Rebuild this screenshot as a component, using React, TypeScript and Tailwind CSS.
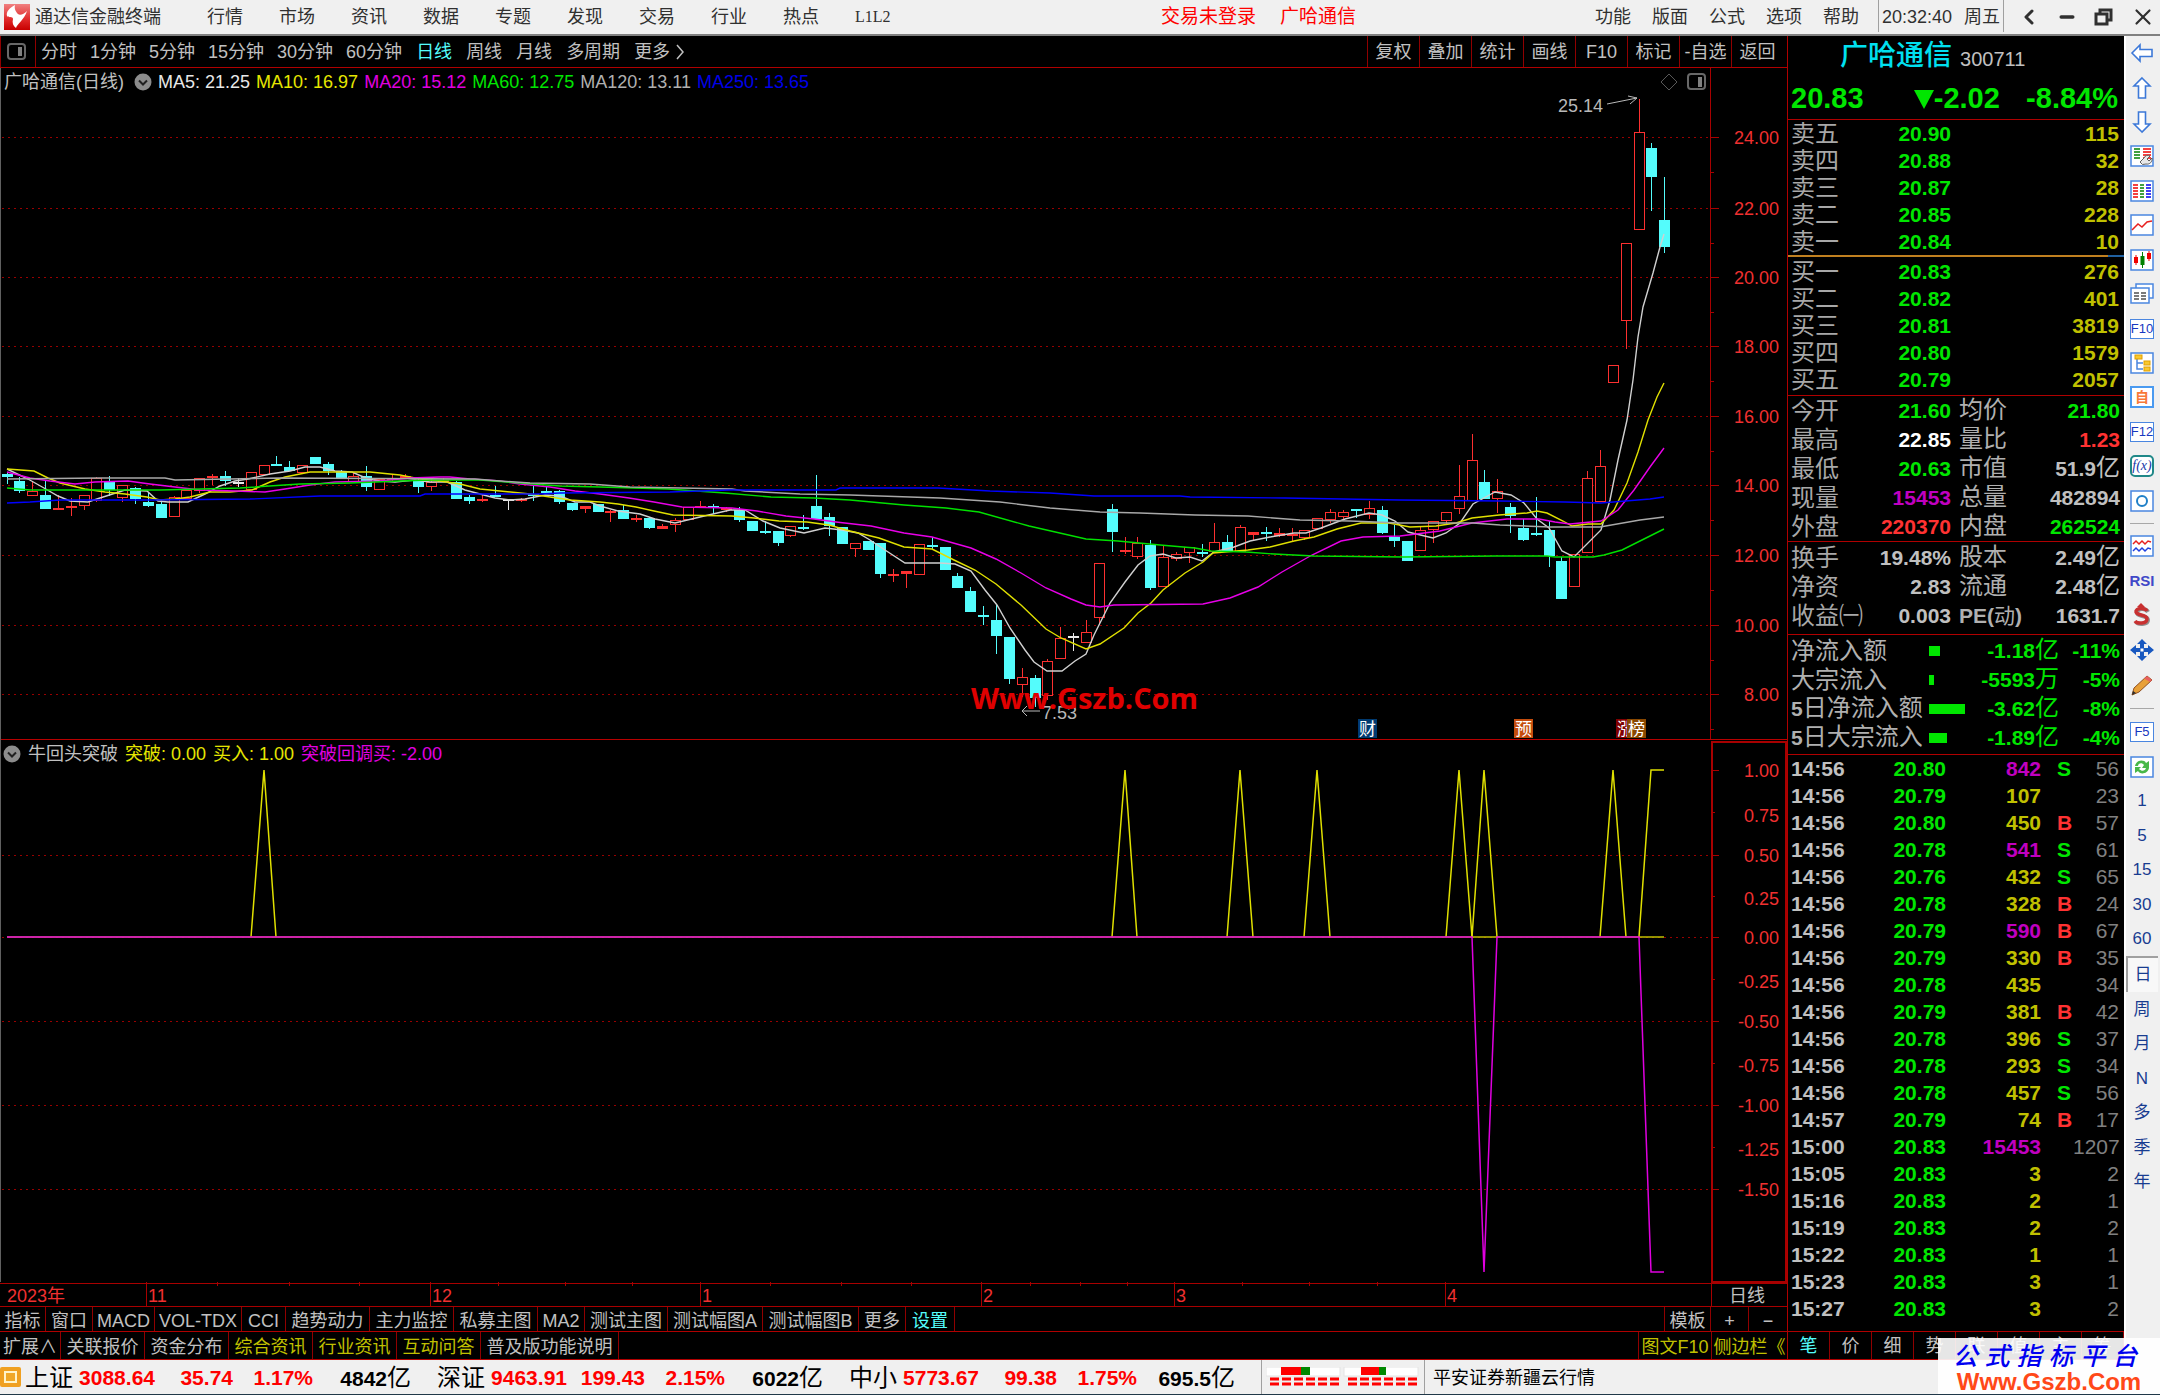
import React from "react";
import { ChevronLeft, Minus, X } from "lucide-react";

const CJK = "font-['Liberation_Sans','Noto_Sans_CJK_SC',sans-serif]";

/* ---------- chart data ---------- */

const STEP = 12.851;
const X0 = 6.5;
const cx = (i: number) => Math.round(X0 + STEP * i);

// kind (u = up, d = down, w = flat), wick top, body top, body bottom, wick bottom
type Candle = [string, number, number, number, number];
const candles: Candle[] = [
  ["d", 473, 474, 477, 484], ["d", 477, 481, 491, 493], ["u", 482, 491, 495, 495], ["d", 481, 495, 509, 509],
  ["u", 495, 508, 510, 510], ["u", 498, 506, 508, 516], ["u", 495, 495, 505, 510], ["u", 477, 478, 500, 502],
  ["d", 476, 481, 490, 496], ["u", 485, 485, 497, 502], ["d", 487, 488, 499, 504], ["d", 492, 502, 506, 507],
  ["d", 500, 504, 518, 518], ["u", 496, 497, 516, 516], ["u", 490, 490, 498, 498], ["u", 478, 478, 490, 493],
  ["u", 474, 476, 478, 485], ["d", 471, 476, 481, 486], ["w", 478, 482, 483, 487], ["u", 472, 472, 489, 489],
  ["u", 465, 465, 474, 474], ["d", 456, 464, 465, 466], ["d", 461, 467, 471, 471], ["u", 465, 465, 472, 474],
  ["d", 457, 457, 464, 464], ["d", 462, 464, 471, 475], ["d", 470, 471, 479, 479], ["u", 473, 476, 481, 481],
  ["d", 466, 476, 487, 491], ["u", 479, 479, 489, 489], ["u", 474, 478, 480, 482], ["u", 474, 476, 478, 479],
  ["d", 479, 481, 487, 493], ["u", 479, 482, 486, 491], ["u", 478, 480, 481, 482], ["d", 481, 482, 499, 499],
  ["d", 495, 497, 501, 504], ["u", 495, 499, 501, 502], ["d", 486, 495, 497, 497], ["w", 499, 499, 500, 510],
  ["u", 498, 499, 501, 502], ["d", 485, 494, 496, 501], ["d", 487, 491, 492, 492], ["d", 490, 491, 502, 504],
  ["d", 503, 503, 510, 511], ["u", 506, 506, 509, 513], ["d", 504, 504, 512, 512], ["u", 510, 511, 513, 522],
  ["d", 505, 510, 519, 519], ["u", 515, 518, 519, 522], ["d", 517, 518, 528, 529], ["u", 524, 526, 529, 529],
  ["u", 518, 520, 524, 532], ["u", 507, 507, 519, 519], ["u", 501, 506, 507, 508], ["d", 504, 506, 507, 514],
  ["u", 507, 508, 510, 512], ["d", 507, 510, 520, 522], ["d", 521, 521, 531, 531], ["d", 521, 531, 532, 534],
  ["d", 531, 531, 543, 546], ["u", 526, 526, 535, 537], ["d", 515, 527, 528, 530], ["d", 475, 506, 519, 519],
  ["d", 513, 517, 526, 536], ["d", 527, 527, 544, 544], ["u", 543, 543, 548, 557], ["d", 541, 541, 550, 550],
  ["d", 543, 543, 574, 578], ["u", 569, 574, 576, 582], ["u", 571, 571, 574, 588], ["u", 544, 544, 574, 574],
  ["d", 537, 545, 547, 549], ["d", 547, 547, 570, 570], ["d", 573, 576, 588, 588], ["d", 587, 591, 612, 612],
  ["d", 606, 615, 617, 625], ["d", 605, 620, 636, 654], ["d", 637, 637, 679, 684], ["u", 668, 677, 684, 697],
  ["d", 675, 678, 698, 707], ["u", 659, 661, 695, 700], ["u", 627, 638, 658, 658], ["w", 633, 636, 638, 651],
  ["u", 620, 632, 642, 642], ["u", 563, 563, 617, 625], ["d", 504, 509, 532, 552], ["u", 537, 550, 552, 554],
  ["u", 537, 543, 556, 559], ["d", 540, 545, 588, 590], ["u", 545, 557, 586, 586], ["u", 552, 554, 558, 561],
  ["u", 547, 547, 552, 563], ["d", 544, 552, 553, 557], ["u", 523, 542, 551, 551], ["d", 535, 542, 551, 551],
  ["u", 525, 527, 551, 551], ["u", 532, 532, 535, 540], ["d", 527, 532, 534, 541], ["u", 528, 533, 536, 537],
  ["u", 528, 534, 535, 541], ["u", 530, 530, 537, 540], ["u", 518, 518, 528, 529], ["u", 509, 512, 519, 523],
  ["u", 510, 512, 516, 519], ["d", 509, 509, 511, 518], ["u", 501, 508, 514, 519], ["d", 506, 510, 533, 534],
  ["d", 525, 537, 541, 547], ["d", 541, 541, 561, 561], ["u", 527, 530, 550, 550], ["u", 521, 521, 529, 543],
  ["u", 512, 512, 520, 524], ["u", 465, 496, 508, 514], ["u", 434, 460, 500, 500], ["d", 470, 482, 499, 499],
  ["u", 479, 491, 498, 513], ["d", 503, 507, 516, 533], ["d", 519, 528, 540, 541], ["d", 497, 533, 534, 536],
  ["d", 521, 530, 556, 567], ["d", 557, 561, 599, 599], ["u", 554, 554, 586, 586], ["u", 471, 478, 552, 552],
  ["u", 450, 466, 501, 501], ["u", 365, 365, 382, 382], ["u", 243, 243, 320, 349], ["u", 99, 132, 229, 229],
  ["d", 143, 148, 177, 211], ["d", 177, 220, 247, 253],
];

const averages: { color: string; points: string }[] = [
  { color: "#d0d0d0", points: "7,469 28,479 44,488 58,496 70,501 88,502 100,498 125,490 147,491 158,501 168,502 188,502 205,494 220,486 235,481 248,479 270,474 290,471 305,467 320,467 335,471 352,472 368,479 380,481 395,482 415,480 430,482 447,482 465,490 480,494 495,498 510,500 525,499 545,495 560,496 575,502 590,502 600,506 618,511 640,514 655,519 675,523 700,517 730,510 745,510 763,521 780,528 804,533 825,528 842,530 858,533 870,540 885,550 905,563 940,563 955,564 971,571 985,590 997,605 1010,628 1025,650 1034,662 1047,671 1062,671 1075,661 1086,654 1094,635 1110,603 1125,582 1138,565 1150,556 1163,554 1176,558 1190,557 1202,561 1214,552 1234,547 1250,541 1270,537 1294,533 1306,533 1321,528 1345,519 1369,513 1382,515 1395,521 1408,532 1433,538 1446,533 1460,523 1473,504 1495,492 1511,495 1524,503 1537,519 1549,528 1562,551 1574,557 1601,530 1610,500 1618,460 1627,420 1633,380 1638,337 1643,307 1653,273 1660,247 1664,234" },
  { color: "#e0e000", points: "7,469 34,471 48,478 60,483 85,489 105,492 125,494 147,497 160,500 175,499 190,497 210,492 230,492 252,490 270,482 285,477 310,472 330,472 370,472 400,475 420,479 440,481 460,484 480,489 500,491 530,494 550,497 570,500 600,502 618,504 636,507 654,511 673,515 732,516 754,518 779,521 807,522 829,525 850,531 879,538 904,547 932,549 954,560 975,570 996,584 1021,605 1046,629 1061,638 1086,649 1100,644 1124,628 1138,613 1151,603 1163,590 1185,573 1203,562 1213,553 1248,550 1270,547 1294,541 1314,537 1337,529 1361,523 1389,523 1410,527 1436,526 1456,523 1472,518 1499,515 1527,513 1537,511 1547,513 1563,521 1572,526 1588,524 1601,524 1614,510 1627,483 1638,452 1648,420 1657,397 1664,383" },
  { color: "#e800e8", points: "7,472 30,478 50,481 75,484 95,482 128,481 150,484 175,487 200,490 235,491 265,492 285,489 310,485 335,482 380,481 410,478 440,477 450,477 470,479 500,481 520,484 550,487 575,491 600,494 629,498 654,502 682,507 732,508 757,511 786,516 814,519 836,522 871,526 904,533 932,537 971,548 996,559 1021,573 1046,588 1071,599 1086,605 1100,607 1114,605 1203,604 1230,598 1258,587 1282,572 1312,555 1341,541 1363,537 1400,536 1440,531 1472,523 1507,519 1539,519 1555,522 1570,524 1601,521 1618,510 1634,490 1650,467 1664,448" },
  { color: "#00e000", points: "7,488 30,490 160,490 240,488 300,484 350,483 400,481 430,480 480,480 520,483 560,486 600,487 668,489 725,493 771,497 814,498 850,500 904,505 946,508 979,512 1029,526 1086,539 1118,541 1160,545 1195,548 1211,551 1246,552 1274,554 1314,556 1404,557 1495,556 1547,556 1555,557 1593,557 1604,555 1622,550 1642,540 1664,529" },
  { color: "#a8a8a8", points: "7,479 100,478 165,478 175,480 280,478 475,479 500,481 530,483 590,484 630,487 732,489 745,491 800,494 850,495 940,498 1000,502 1050,508 1100,512 1140,513 1195,515 1248,516 1300,520 1350,521 1400,523 1473,523 1500,525 1550,527 1600,527 1640,520 1664,517" },
  { color: "#0000ff", points: "7,503 30,502 60,500 150,500 250,499 320,496 420,496 425,494 540,494 560,493 670,492 730,490 836,490 840,488 938,488 990,491 1050,493 1094,496 1180,496 1190,497 1285,498 1400,500 1500,501 1565,502 1601,503 1650,499 1664,497" },
];

const priceScale: [string, number][] = [
  ["24.00", 137], ["22.00", 208], ["20.00", 277], ["18.00", 346], ["16.00", 416],
  ["14.00", 485], ["12.00", 555], ["10.00", 625], ["8.00", 694],
];

const signalScale: [string, number, number][] = [
  ["1.00", 770, 770], ["0.75", 812, 815], ["0.50", 855, 855], ["0.25", 896, 898], ["0.00", 937, 937],
  ["-0.25", 979, 981], ["-0.50", 1021, 1021], ["-0.75", 1063, 1065], ["-1.00", 1105, 1105],
  ["-1.25", 1147, 1149], ["-1.50", 1189, 1189],
];

function CandleBar({ data, i }: { data: Candle; i: number }) {
  const [kind, hi, top, bottom, lo] = data;
  const x = cx(i);
  const h = Math.max(bottom - top, 2);
  const color = kind === "d" ? "#54fcfc" : kind === "w" ? "#e8e8e8" : "#fc3030";
  const hollow = kind === "u" && bottom - top > 3;
  return (
    <g stroke={color} fill={color} strokeWidth="1">
      {hi < top && <line x1={x} x2={x} y1={hi} y2={top} />}
      {lo > bottom && <line x1={x} x2={x} y1={bottom} y2={lo} />}
      {hollow ? (
        <rect x={x - 5} y={top} width="10" height={h} fill="#000" />
      ) : (
        <rect x={x - 5} y={top} width="11" height={h} stroke="none" />
      )}
    </g>
  );
}

function Tag({ x, color, children }: { x: number; color: string; children: string }) {
  return (
    <g>
      <rect x={x} y="719" width="19" height="19" fill={color} />
      <text x={x + 1} y="735" fontSize="17" fill="#fff">{children}</text>
    </g>
  );
}

function PriceChart() {
  return (
    <svg viewBox="0 68 1787 672" className={`block h-auto w-full ${CJK}`} role="img" aria-label="日线K线图">
      <g shapeRendering="crispEdges">
        {priceScale.map(([t, y]) => (
          <g key={t}>
            <line x1="2" x2="1710" y1={y} y2={y} stroke="#980000" strokeDasharray="2 4" strokeWidth="1" />
            <line x1="1710" x2="1719" y1={y} y2={y} stroke="#a80000" />
            <line x1="1710" x2="1714" y1={y + 35} y2={y + 35} stroke="#a80000" />
          </g>
        ))}
        <line x1="1710" x2="1710" y1="68" y2="740" stroke="#a80000" strokeWidth="1" />
        <line x1="0" x2="1787" y1="740" y2="740" stroke="#b80000" strokeWidth="2" />
        <line x1="0" x2="0" y1="68" y2="740" stroke="#606060" />
        {candles.map((c, i) => <CandleBar key={i} data={c} i={i} />)}
      </g>
      <g fill="none" strokeWidth="1.4">
        {averages.map((a) => <polyline key={a.color} points={a.points} stroke={a.color} />)}
      </g>
      {priceScale.map(([t, y]) => (
        <text key={t} x="1779" y={y + 7} textAnchor="end" fontSize="18" fill="#f03030">{t}</text>
      ))}
      <text x="1558" y="112" fontSize="18" fill="#b8b8b8">25.14</text>
      <path d="M1607 104 L1637 98 M1628 96 L1637 98 L1630 104" stroke="#b8b8b8" fill="none" />
      <text x="1042" y="719" fontSize="18" fill="#b8b8b8">7.53</text>
      <path d="M1040 711 H1022 M1027 706 L1022 711 L1027 716" stroke="#b8b8b8" fill="none" />
      <text x="971" y="709" fontSize="29" fontWeight="700" fill="#e00000" className="font-['Open_Sans','Noto_Sans',sans-serif]">Www.Gszb.Com</text>
      <path d="M1669 74 L1677 82 L1669 90 L1661 82 Z" fill="none" stroke="#585858" />
      <rect x="1688" y="74" width="17" height="15" rx="3" fill="none" stroke="#686868" strokeWidth="2" />
      <rect x="1698" y="77" width="4" height="10" fill="#808080" />
      <Tag x={1358} color="#003a70">财</Tag>
      <Tag x={1514} color="#c44c0c">预</Tag>
      <Tag x={1616} color="#800000">涨</Tag>
      <Tag x={1627} color="#8a4800">榜</Tag>
    </svg>
  );
}

const months: [string, number][] = [["11", 146], ["12", 430], ["1", 700], ["2", 981], ["3", 1174], ["4", 1445]];
const weekTicks = [217, 289, 359, 498, 565, 632, 770, 841, 911, 1030, 1080, 1127, 1242, 1309, 1377];
const peaks = [20, 87, 96, 102, 113, 115, 125];

function SignalChart() {
  return (
    <svg viewBox="0 740 1787 567" className={`block h-auto w-full ${CJK}`} role="img" aria-label="牛回头突破">
      <g shapeRendering="crispEdges" stroke="#a80000">
        {signalScale.map(([t, y], k) => (
          <g key={t}>
            {k % 2 === 0 && k > 0 && <line x1="2" x2="1710" y1={y} y2={y} stroke="#980000" strokeDasharray="2 4" />}
            <line x1="1712" x2={k % 2 === 0 ? 1719 : 1715} y1={y} y2={y} />
          </g>
        ))}
        <line x1="0" x2="0" y1="740" y2="1282" stroke="#606060" />
        <rect x="1712" y="742" width="74" height="540" fill="none" strokeWidth="2" />
        <line x1="0" x2="1787" y1="1283" y2="1283" />
        <line x1="0" x2="1787" y1="1306" y2="1306" />
        <line x1="1711" x2="1711" y1="1282" y2="1306" />
        {months.map(([m, x]) => <line key={m} x1={x} x2={x} y1="1282" y2="1306" />)}
        {weekTicks.map((x) => <line key={x} x1={x} x2={x} y1="1282" y2="1286" />)}
      </g>
      <g fill="none" strokeWidth="1.5">
        <polyline points={`${cx(0)},937 ${cx(129)},937`} stroke="#c0c000" />
        {peaks.map((p) => (
          <polyline key={p} points={`${cx(p - 1)},937 ${cx(p)},770 ${cx(p + 1)},937`} stroke="#e0e000" />
        ))}
        <polyline points={`${cx(127)},937 ${cx(128)},770 ${cx(129)},770`} stroke="#e0e000" />
        <polyline points={`${cx(0)},937 ${cx(114)},937 ${cx(115)},1272 ${cx(116)},937 ${cx(127)},937 ${cx(128)},1272 ${cx(129)},1272`} stroke="#e000e0" />
      </g>
      <g fontSize="18" fill="#f03030">
        {signalScale.map(([t, , y]) => <text key={t} x="1779" y={y + 7} textAnchor="end">{t}</text>)}
        <text x="7" y="1302">2023年</text>
        {months.map(([m, x]) => <text key={m} x={x + 2} y="1302">{m}</text>)}
      </g>
      <text x="1747" y="1302" textAnchor="middle" fontSize="18" fill="#c0c0c0">日线</text>
    </svg>
  );
}

function Dot() {
  return (
    <svg viewBox="0 0 18 18" className="size-[18px] shrink-0" aria-hidden="true">
      <circle cx="9" cy="9" r="8.5" fill="#8c8c8c" />
      <path d="M5 7.5 L9 11.5 L13 7.5" stroke="#202020" strokeWidth="2" fill="none" />
    </svg>
  );
}

/* ---------- top bars ---------- */

function TitleBar() {
  return (
    <header className="flex h-9 items-center whitespace-nowrap border-b-2 border-[#808080] bg-[#f0f0f0] text-lg text-[#303030]">
      <svg viewBox="0 0 26 26" className="ml-1 size-[26px]" aria-hidden="true">
        <defs>
          <linearGradient id="logo" x1="0" y1="0" x2="0" y2="1">
            <stop offset="0" stopColor="#f08080" /><stop offset="0.6" stopColor="#e02828" /><stop offset="1" stopColor="#c80000" />
          </linearGradient>
        </defs>
        <rect width="26" height="26" fill="url(#logo)" />
        <path d="M11 1 C5 4 2 8 3 12 C4 14 9 12 9 15 C8 19 9 22 12 24 C13 20 20 16 23 7 C20 10 16 12 14 10 C12 8 10 5 11 1 Z" fill="#fff" />
      </svg>
      <h1 className="ml-[5px]">通达信金融终端</h1>
      <nav className="ml-[46px] flex gap-9">
        {["行情", "市场", "资讯", "数据", "专题", "发现", "交易", "行业", "热点"].map((t) => <button key={t}>{t}</button>)}
        <button className="font-['Liberation_Serif',serif] text-base">L1L2</button>
      </nav>
      <div className="ml-auto flex gap-6 text-[19px] text-[#ff0000]">
        <button>交易未登录</button>
        <button>广哈通信</button>
      </div>
      <nav className="ml-[239px] flex gap-[21px]">
        {["功能", "版面", "公式", "选项", "帮助"].map((t) => <button key={t}>{t}</button>)}
      </nav>
      <div className="ml-[19px] flex h-8 w-[126px] items-center justify-between self-start border-x border-[#a0a0a0] px-[3px] pt-0.5">
        <span>20:32:40</span><span>周五</span>
      </div>
      <div className="flex w-[156px] items-center justify-between pl-[13px] pr-1 text-[#303030]">
        <button aria-label="后退"><ChevronLeft size={24} strokeWidth={3} /></button>
        <button aria-label="最小化"><Minus size={20} strokeWidth={4} /></button>
        <button aria-label="还原">
          <svg viewBox="0 0 20 20" className="size-5" aria-hidden="true">
            <path d="M6 6 V3 H17 V13 H14" fill="none" stroke="#303030" strokeWidth="3" />
            <rect x="2" y="7" width="11" height="10" fill="none" stroke="#303030" strokeWidth="3" />
          </svg>
        </button>
        <button aria-label="关闭"><X size={26} strokeWidth={2} /></button>
      </div>
    </header>
  );
}

function PeriodBar() {
  return (
    <div className="flex h-8 items-stretch whitespace-nowrap border-b border-[#b00000] text-lg text-[#c0c0c0]">
      <button aria-label="切换面板" className="flex w-9 items-center border-x border-[#900000] pl-1.5">
        <svg viewBox="0 0 20 18" className="h-[18px] w-5" aria-hidden="true">
          <rect x="1" y="1" width="17" height="15" rx="3" fill="none" stroke="#686868" strokeWidth="2" />
          <rect x="11" y="4" width="4" height="9" fill="#808080" />
        </svg>
      </button>
      <div className="ml-[5px] flex items-center gap-[13px]">
        {["分时", "1分钟", "5分钟", "15分钟", "30分钟", "60分钟"].map((t) => <button key={t}>{t}</button>)}
      </div>
      <div className="ml-[14px] flex items-center gap-[14px]">
        {["日线", "周线", "月线", "多周期"].map((t) => (
          <button key={t} className={t === "日线" ? "text-[#54fcfc]" : ""}>{t}</button>
        ))}
        <button className="flex items-center">更多
          <svg viewBox="0 0 10 18" className="ml-1.5 h-[18px] w-2.5" aria-hidden="true"><path d="M1 2 L7 9 L1 16" fill="none" stroke="#c0c0c0" strokeWidth="1.5" /></svg>
        </button>
      </div>
      <div className="ml-auto flex pr-1">
        {["复权", "叠加", "统计", "画线", "F10", "标记", "-自选", "返回"].map((t) => (
          <button key={t} className="w-[52px] border-l border-[#900000]">{t}</button>
        ))}
      </div>
    </div>
  );
}

/* ---------- tab strips under the chart ---------- */

const indicatorTabs: [string, string][] = [
  ["指标", "w-[46px]"], ["窗口", "w-[47px]"], ["MACD", "w-[62px]"], ["VOL-TDX", "w-[87px]"], ["CCI", "w-[44px]"],
  ["趋势动力", "w-[84px]"], ["主力监控", "w-[84px]"], ["私募主图", "w-[84px]"], ["MA2", "w-[47px]"], ["测试主图", "w-[83px]"],
  ["测试幅图A", "w-[95px]"], ["测试幅图B", "w-[96px]"], ["更多", "w-[47px]"], ["设置", "w-[49px] text-[#54fcfc]"],
];
const extensionTabs: [string, string][] = [
  ["扩展∧", "w-[61px]"], ["关联报价", "w-[84px]"], ["资金分布", "w-[84px]"], ["综合资讯", "w-[84px] text-[#c0c000]"],
  ["行业资讯", "w-[84px] text-[#c0c000]"], ["互动问答", "w-[84px] text-[#c0c000]"], ["普及版功能说明", "w-[138px]"],
];

function Strip({ tabs, end, height }: { tabs: [string, string][]; end: [string, string][]; height: string }) {
  return (
    <div className={`flex whitespace-nowrap border-b border-[#b00000] text-lg/6 text-[#c0c0c0] ${height}`}>
      {tabs.map(([t, c]) => <button key={t} className={`border-r border-[#900000] pt-0.5 ${c}`}>{t}</button>)}
      <div className="ml-auto flex">
        {end.map(([t, c]) => <button key={t} className={`border-l border-[#900000] pt-0.5 ${c}`}>{t}</button>)}
      </div>
    </div>
  );
}

/* ---------- quote panel ---------- */

const G = "text-[#00e600]";
const Y = "text-[#c0c000]";
const M = "text-[#c000c0]";
const R = "text-[#ff3232]";
const W = "text-[#c0c0c0]";

const asks = [["卖五", "20.90", "115"], ["卖四", "20.88", "32"], ["卖三", "20.87", "28"], ["卖二", "20.85", "228"], ["卖一", "20.84", "10"]];
const bids = [["买一", "20.83", "276"], ["买二", "20.82", "401"], ["买三", "20.81", "3819"], ["买四", "20.80", "1579"], ["买五", "20.79", "2057"]];

function Book({ rows, label }: { rows: string[][]; label: string }) {
  return (
    <table className="w-full table-fixed" aria-label={label}>
      <tbody>
        {rows.map(([n, p, v]) => (
          <tr key={n} className="h-[27px] text-[21px]/[27px]">
            <th className="w-[60px] pl-[3px] text-left text-2xl/[27px] font-normal text-[#a8a8a8]">{n}</th>
            <td className={`w-[103px] text-right font-bold ${G}`}>{p}</td>
            <td className={`pr-[5px] text-right font-bold ${Y}`}>{v}</td>
          </tr>
        ))}
      </tbody>
    </table>
  );
}

function Num({ children }: { children: string }) {
  const m = /^(.*?)([亿万]?)$/.exec(children)!;
  return <><b>{m[1]}</b>{m[2] && <span className="text-2xl/7">{m[2]}</span>}</>;
}

type Pair = [string, string, string, string, string, string];
const stats: Pair[] = [
  ["今开", "21.60", G, "均价", "21.80", G],
  ["最高", "22.85", "text-white", "量比", "1.23", R],
  ["最低", "20.63", G, "市值", "51.9亿", W],
  ["现量", "15453", M, "总量", "482894", W],
  ["外盘", "220370", R, "内盘", "262524", G],
];
const capital: Pair[] = [
  ["换手", "19.48%", W, "股本", "2.49亿", W],
  ["净资", "2.83", W, "流通", "2.48亿", W],
  ["收益㈠", "0.003", W, "PE(动)", "1631.7", W],
];

function Pairs({ rows }: { rows: Pair[] }) {
  return (
    <dl>
      {rows.map(([a, av, ac, b, bv, bc]) => (
        <div key={a} className="flex h-[29px] items-center whitespace-nowrap pl-[3px] pr-1 text-[21px]/7">
          <dt className="w-[72px] text-2xl/7 text-[#a8a8a8]">{a}</dt>
          <dd className={`w-[88px] text-right ${ac}`}><Num>{av}</Num></dd>
          <dt className="ml-2 w-[68px] text-[#b0b0b0]">
            {b.startsWith("PE") ? <><b>PE(</b>动<b>)</b></> : <span className="text-2xl/7">{b}</span>}
          </dt>
          <dd className={`flex-1 text-right ${bc}`}><Num>{bv}</Num></dd>
        </div>
      ))}
    </dl>
  );
}

const flows: [string, string, string, string][] = [
  ["净流入额", "w-[11px]", "-1.18亿", "-11%"],
  ["大宗流入", "w-[5px]", "-5593万", "-5%"],
  ["5日净流入额", "w-9", "-3.62亿", "-8%"],
  ["5日大宗流入", "w-[18px]", "-1.89亿", "-4%"],
];

const ticks = [
  ["14:56", "20.80", "842", "S", "56"], ["14:56", "20.79", "107", "", "23"], ["14:56", "20.80", "450", "B", "57"],
  ["14:56", "20.78", "541", "S", "61"], ["14:56", "20.76", "432", "S", "65"], ["14:56", "20.78", "328", "B", "24"],
  ["14:56", "20.79", "590", "B", "67"], ["14:56", "20.79", "330", "B", "35"], ["14:56", "20.78", "435", "", "34"],
  ["14:56", "20.79", "381", "B", "42"], ["14:56", "20.78", "396", "S", "37"], ["14:56", "20.78", "293", "S", "34"],
  ["14:56", "20.78", "457", "S", "56"], ["14:57", "20.79", "74", "B", "17"], ["15:00", "20.83", "15453", "", "1207"],
  ["15:05", "20.83", "3", "", "2"], ["15:16", "20.83", "2", "", "1"], ["15:19", "20.83", "2", "", "2"],
  ["15:22", "20.83", "1", "", "1"], ["15:23", "20.83", "3", "", "1"], ["15:27", "20.83", "3", "", "2"],
];

function QuotePanel() {
  return (
    <aside className="flex w-[337px] shrink-0 flex-col border-l border-[#b00000] bg-black">
      <div className="h-[84px] border-b border-[#b00000]">
        <div className="flex h-9 items-center gap-2 pl-[52px] pt-1">
          <h2 className="text-[28px]/8 font-medium text-[#00e0f0]">广哈通信</h2>
          <span className="pt-1.5 text-xl/6 text-[#c0c0c0]">300711</span>
        </div>
        <div className={`flex h-[47px] items-center justify-between pl-[3px] pr-1.5 pt-1.5 text-[29px] font-bold ${G}`}>
          <span>20.83</span>
          <span className="ml-6 flex items-center">
            <svg viewBox="0 0 20 20" className="size-5" aria-hidden="true"><path d="M0 1 H20 L10 20 Z" fill="#00e600" /></svg>-2.02
          </span>
          <span>-8.84%</span>
        </div>
      </div>
      <Book rows={asks} label="卖盘" />
      <div className="flex h-0.5"><i className="flex-1 bg-[#c08020]" /><i className="w-4 bg-[#2060a0]" /></div>
      <div className="pt-px"><Book rows={bids} label="买盘" /></div>
      <div className="mt-0.5 border-y border-[#b00000]"><Pairs rows={stats} /></div>
      <div className="border-b border-[#b00000] pb-1 pt-px"><Pairs rows={capital} /></div>
      <dl className="border-b border-[#b00000] pb-0.5 pt-px">
        {flows.map(([n, w, v, p]) => (
          <div key={n} className={`flex h-[29px] items-center whitespace-nowrap pl-[3px] pr-1 text-[21px]/7 ${G}`}>
            <dt className="w-[138px] text-2xl/7 text-[#b0b0b0]">
              {n.startsWith("5") ? <><b className="text-[21px]">5</b>{n.slice(1)}</> : n}
            </dt>
            <dd className="w-9"><span className={`block h-2.5 bg-[#00e600] ${w}`} /></dd>
            <dd className="flex-1 text-right"><Num>{v}</Num></dd>
            <dd className="w-[61px] text-right font-bold">{p}</dd>
          </div>
        ))}
      </dl>
      <table className="w-full table-fixed text-[21px]/[27px] font-bold" aria-label="分时成交">
        <tbody>
          {ticks.map(([t, p, v, s, n], i) => (
            <tr key={i} className="h-[27px]">
              <td className="w-[60px] pl-[3px] text-[#c0c0c0]">{t}</td>
              <td className={`w-[98px] text-right ${G}`}>{p}</td>
              <td className={`w-[95px] text-right ${Number(v) > 500 ? M : Y}`}>{v}</td>
              <td className={`w-8 pl-4 ${s === "S" ? G : R}`}>{s}</td>
              <td className="pr-[5px] text-right font-normal text-[#808080]">{n}</td>
            </tr>
          ))}
        </tbody>
      </table>
      <div className="mt-auto grid h-[29px] grid-cols-8 border-y border-[#b00000] text-lg/6 text-[#c0c0c0]">
        {["笔", "价", "细", "势", "联", "值", "主", "筹"].map((t, i) => (
          <button key={t} className={`border-r border-[#900000] pt-px ${i === 0 ? "text-[#54fcfc]" : ""}`}>{t}</button>
        ))}
      </div>
    </aside>
  );
}

/* ---------- tool rail ---------- */

function Ico({ children, frame = true }: { children: React.ReactNode; frame?: boolean }) {
  return (
    <svg viewBox="0 0 24 24" className="size-6" aria-hidden="true">
      {frame && <rect x="1" y="2" width="22" height="20" fill="#fff" stroke="#4a86e0" strokeWidth="1.5" />}
      {children}
    </svg>
  );
}

const rows3 = [6, 9, 12, 15, 18];
const arrow = "M2 12 L10 4 V8.500 H22 V15.500 H10 V20 Z";
const blueArrow = { fill: "#fff", stroke: "#3c78d8", strokeWidth: 1.6 };

function KeyBox({ children }: { children: string }) {
  return <span className="flex h-5 w-6 items-center justify-center border border-[#4a86e0] bg-white text-[13px]/4 text-[#1838c0]">{children}</span>;
}

const upperTools: [string, React.ReactNode][] = [
  ["后退", <Ico frame={false}><path d={arrow} {...blueArrow} /></Ico>],
  ["上一个", <Ico frame={false}><path d={arrow} transform="rotate(90 12 12)" {...blueArrow} /></Ico>],
  ["下一个", <Ico frame={false}><path d={arrow} transform="rotate(-90 12 12)" {...blueArrow} /></Ico>],
  ["自选设置", <Ico>
    {[5, 8, 11, 14].map((y) => <g key={y}><path d={`M4 ${y} H10`} stroke="#008000" strokeWidth="1.5" /><path d={`M13 ${y} H21`} stroke="#f00000" strokeWidth="1.5" /></g>)}
    <path d="M10 18 L14 14 A4 4 0 0 1 20 12 L17 15 L19 17 L22 14 A5 5 0 0 1 16 20 Q12 22 10 18 Z" fill="#e8e8e8" stroke="#606060" /></Ico>],
  ["报价列表", <Ico>{rows3.map((y) => <g key={y} strokeWidth="1.5"><path d={`M3 ${y} H8`} stroke="#f00000" /><path d={`M10 ${y} H14`} stroke="#008000" /><path d={`M16 ${y} H21`} stroke="#0000f0" /></g>)}</Ico>],
  ["分时走势", <Ico><path d="M2 17 L8 11 L12 14 L17 9 L22 8" stroke="#e82020" strokeWidth="1.500" fill="none" /></Ico>],
  ["K线", <Ico><path d="M6 7 V17 M19 3 V13" stroke="#f00000" /><path d="M12.5 4 V20" stroke="#008000" /><rect x="4" y="9" width="4" height="6" fill="#f00000" /><rect x="10.500" y="8" width="4" height="9" fill="#008000" /><rect x="17" y="5" width="4" height="6" fill="#f00000" /></Ico>],
  ["多窗口", <Ico frame={false}><rect x="6" y="2" width="17" height="14" fill="#fff" stroke="#4a86e0" strokeWidth="1.500" /><rect x="1" y="6" width="18" height="15" fill="#fff" stroke="#4a86e0" strokeWidth="1.500" />{[11, 14, 17].map((y) => <path key={y} d={`M4 ${y} H9 M11 ${y} H16`} stroke="#505050" strokeWidth="1.500" />)}</Ico>],
  ["基本资料", <KeyBox>F10</KeyBox>],
  ["板块", <Ico><path d="M7 7 V18 H13 M7 12 H13" stroke="#4a86e0" fill="none" strokeWidth="1.500" /><rect x="5" y="4" width="7" height="4" fill="#f8c830" stroke="#e0a000" /><rect x="14" y="10" width="6" height="4" fill="#f8c830" stroke="#e0a000" /><rect x="14" y="16" width="6" height="4" fill="#f8c830" stroke="#e0a000" /></Ico>],
  ["自选股", <span className="flex h-[22px] w-6 items-center justify-center border-2 border-[#4a9af0] bg-white text-sm/4 font-bold text-[#f87838]">自</span>],
  ["闪电交易", <KeyBox>F12</KeyBox>],
  ["公式管理", <span className="flex h-[22px] w-6 items-center justify-center rounded-[5px] border-2 border-[#208888] bg-white font-['Liberation_Serif',serif] text-sm/4 italic text-[#1838a8]">f(x)</span>],
  ["循环", <Ico><circle cx="12" cy="12" r="5" fill="none" stroke="#2080c8" strokeWidth="2" /></Ico>],
];

const middleTools: [string, React.ReactNode][] = [
  ["叠加指标", <Ico><path d="M3 10 L6 7 L9 10 L12 7 L15 10 L18 7 L21 8" stroke="#e82020" strokeWidth="1.500" fill="none" /><path d="M3 17 L6 14 L9 17 L12 14 L15 17 L18 14 L21 15" stroke="#2040e0" strokeWidth="1.500" fill="none" /></Ico>],
  ["RSI", <b className="text-[15px] text-[#4048c8]">RSI</b>],
  ["资金", <Ico frame={false}><path d="M18 9 C16 5 7 5 7 10 C7 14 18 12 18 17 C18 22 8 22 6 19" stroke="#909090" strokeWidth="4" fill="none" /><path d="M17 8 C15 4 5 5 6 9 C7 13 17 11 17 16 C17 21 7 21 5 18" stroke="#c83030" strokeWidth="3.5" fill="none" /><path d="M7 4 L11 0 L15 4 Z" fill="#c83030" /></Ico>],
  ["移动", <Ico frame={false}><path d="M12 1 L17 6 H14 V10 H18 V7 L24 12 L18 17 V14 H14 V18 H17 L12 23 L7 18 H10 V14 H6 V17 L0 12 L6 7 V10 H10 V6 H7 Z" fill="#1858c0" /><rect x="10.500" y="10.500" width="3" height="3" fill="#fff" /></Ico>],
  ["画线工具", <Ico frame={false}><path d="M2 22 L4 15 L17 3 L22 7 L9 19 Z" fill="#e8a038" stroke="#905020" /><path d="M17 3 L22 7 L20 9 L14 5.500 Z" fill="#e86060" /><path d="M2 22 L3 18 L6 20 Z" fill="#303030" /></Ico>],
];

const lowerTools: [string, React.ReactNode][] = [
  ["F5", <KeyBox>F5</KeyBox>],
  ["刷新", <Ico><path d="M5 11 C6 5 14 4 16 8 L19 6 V13 H12 L14 10 C12 7 8 8 8 11 Z M19 13 C18 19 10 20 8 16 L5 18 V12 H11 L9 14 C12 17 15 16 16 13 Z" fill="#48b848" /></Ico>],
];

const periods = ["1", "5", "15", "30", "60", "日", "周", "月", "N", "多", "季", "年"];

function ToolRail() {
  const cell = "flex flex-1 items-center justify-center";
  return (
    <nav aria-label="工具栏" className="flex w-9 shrink-0 flex-col border-l-2 border-white bg-[#f0f0f0] pr-0.5 text-[#183c90]">
      <div className="flex h-[482px] flex-col">
        {upperTools.map(([n, icon]) => <button key={n} aria-label={n} className={cell}>{icon}</button>)}
      </div>
      <hr className="mx-1 my-[5px] border-[#a8a8a8]" />
      <div className="flex h-[173px] flex-col">
        {middleTools.map(([n, icon]) => <button key={n} aria-label={n} className={cell}>{icon}</button>)}
      </div>
      <hr className="mx-1 my-[6px] border-[#a8a8a8]" />
      <div className="flex h-[484px] flex-col">
        {lowerTools.map(([n, icon]) => <button key={n} aria-label={n} className={cell}>{icon}</button>)}
        {periods.map((p) => (
          <button key={p} className={`${cell} text-[17px] ${p === "日" ? "border-l-2 border-t-2 border-[#a0a0a0] bg-[#f8f8f8]" : ""}`}>{p}</button>
        ))}
      </div>
    </nav>
  );
}

/* ---------- status bar ---------- */

const indices = [
  ["上证", "3088.64", "35.74", "1.17%", "4842"],
  ["深证", "9463.91", "199.43", "2.15%", "6022"],
  ["中小", "5773.67", "99.38", "1.75%", "695.5"],
];

function Leds() {
  const block = (x: number, r: number, g: number, gw: number) => (
    <g>
      <rect x={x} y="0" width="74" height="9" fill="#fff" stroke="#e4e4e4" />
      <rect x={r} y="0" width={g - r} height="8" fill="#ff0000" />
      <rect x={g} y="0" width={gw} height="8" fill="#008800" />
      {[0, 1, 2, 3, 4, 5].map((k) => (
        <path key={k} d={`M${x + 4 + k * 12} 12 h9 M${x + 4 + k * 12} 17 h9`} stroke="#ff0000" strokeWidth="3" />
      ))}
    </g>
  );
  return (
    <svg viewBox="0 0 154 20" className="h-5 w-[154px]" role="img" aria-label="涨跌分布">
      {block(0, 15, 35, 9)}
      {block(78, 95, 113, 7)}
    </svg>
  );
}

function StatusBar() {
  return (
    <footer className="relative flex h-[35px] items-center whitespace-nowrap border-b border-[#203848] bg-[#f0f0f0] text-[21px] text-black">
      <svg viewBox="0 0 22 22" className="mr-[3px] size-[22px]" aria-hidden="true">
        <rect x="0" y="1" width="21" height="20" rx="2" fill="#f0a020" />
        <rect x="4" y="5" width="13" height="12" fill="#fff4c8" />
        <rect x="6" y="7" width="9" height="8" fill="#f0a828" />
      </svg>
      {indices.map(([n, v, c, p, a]) => (
        <div key={n} className="mr-[26px] flex items-center pt-0.5 text-right font-bold text-[#ff0000]">
          <span className="w-12 text-left text-2xl font-normal text-black">{n}</span>
          <span className="w-[82px]">{v}</span>
          <span className="w-[78px]">{c}</span>
          <span className="w-20">{p}</span>
          <span className="w-[98px] text-black">{a}<span className="text-2xl font-normal">亿</span></span>
        </div>
      ))}
      <span className="flex h-full items-center border-x border-[#a0a0a0] px-1"><Leds /></span>
      <span className="ml-2 pt-0.5 text-lg">平安证券新疆云行情</span>
      <p className="absolute bottom-0 right-0 flex h-14 w-[222px] flex-col items-center justify-end bg-white/90">
        <span className="whitespace-pre pr-2 text-[25px]/7 font-medium italic text-[#0000f0]">公 式 指 标 平 台</span>
        <span className="text-2xl/6 font-bold text-[#ff4818]">Www.Gszb.Com</span>
      </p>
    </footer>
  );
}

export default function App() {
  return (
    <div className={`flex min-h-screen w-full flex-col bg-black ${CJK}`}>
      <TitleBar />
      <div className="flex flex-1">
        <main className="flex min-w-0 flex-1 flex-col">
          <PeriodBar />
          <section className="relative">
            <PriceChart />
            <div className="absolute left-1 top-0 flex h-7 items-center gap-1.5 whitespace-nowrap text-lg text-[#c0c0c0]">
              <span className="mr-1">广哈通信(日线)</span>
              <Dot />
              <span className="text-[#e8e8e8]">MA5: 21.25</span>
              <span className="text-[#e6e600]">MA10: 16.97</span>
              <span className="text-[#e000e0]">MA20: 15.12</span>
              <span className="text-[#00e600]">MA60: 12.75</span>
              <span className="text-[#b0b0b0]">MA120: 13.11</span>
              <span className="text-[#0000e8]">MA250: 13.65</span>
            </div>
          </section>
          <section className="relative">
            <SignalChart />
            <div className="absolute left-[3px] top-0 flex h-7 items-center gap-[7px] whitespace-nowrap text-lg text-[#c0c0c0]">
              <Dot />
              <span>牛回头突破</span>
              <span className="text-[#e6e600]">突破: 0.00</span>
              <span className="text-[#e6e600]">买入: 1.00</span>
              <span className="text-[#e000e0]">突破回调买: -2.00</span>
            </div>
          </section>
          <Strip height="h-[25px]" tabs={indicatorTabs} end={[["模板", "w-[46px]"], ["+", "w-[38px]"], ["−", "w-[39px]"]]} />
          <Strip height="h-7" tabs={extensionTabs} end={[["图文F10", "w-[73px] text-[#c0c000]"], ["侧边栏《", "w-[76px] text-[#c0c000]"]]} />
        </main>
        <QuotePanel />
        <ToolRail />
      </div>
      <StatusBar />
    </div>
  );
}
